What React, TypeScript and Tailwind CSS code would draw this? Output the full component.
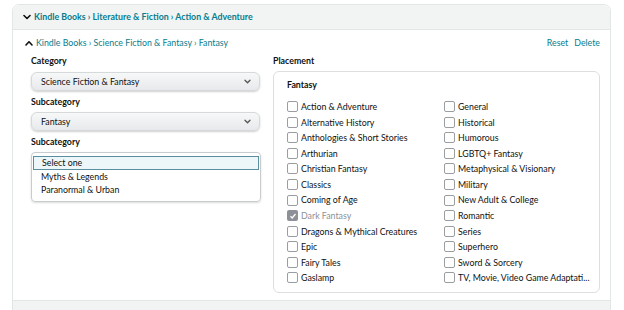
import React from "react";

const font = { fontFamily: 'Lato, "Open Sans", "Liberation Sans", Arial, sans-serif' };

function Chevron({ up = false, className = "" }: { up?: boolean; className?: string }) {
  return (
    <svg width="8" height="6" viewBox="0 0 8 6" className={className}>
      <path
        d={up ? "M1 5 L4 1.8 L7 5" : "M1 1.5 L4 4.5 L7 1.5"}
        fill="none"
        stroke="currentColor"
        strokeWidth="1.6"
        strokeLinecap="round"
        strokeLinejoin="round"
      />
    </svg>
  );
}

function Select({ value }: { value: string }) {
  return (
    <div className="h-[19px] w-[229px] rounded-[6px] border border-[#d5d9d9] bg-gradient-to-b from-[#f7f8f8] to-[#e7e9ec] shadow-[0_1px_2px_rgba(15,17,17,0.2)] flex items-center justify-between pl-[9px] pr-[8px] text-[8.8px] text-[#0f1111]">
      <span>{value}</span>
      <Chevron className="text-[#555] w-[7px] h-[5px]" />
    </div>
  );
}

function Box({ label, checked = false }: { label: string; checked?: boolean }) {
  return (
    <div className="flex items-center h-[15.55px] gap-[3px]">
      {checked ? (
        <div className="w-[11px] h-[11px] rounded-[2px] bg-[#8d9096] flex items-center justify-center">
          <svg width="8" height="8" viewBox="0 0 8 8">
            <path d="M1.5 4.2 L3.2 6 L6.5 2" fill="none" stroke="white" strokeWidth="1.3" />
          </svg>
        </div>
      ) : (
        <div className="w-[11px] h-[11px] rounded-[2px] border border-[#9a9ea0] bg-white" />
      )}
      <span className={`text-[8.8px] ${checked ? "text-[#8d9096]" : "text-[#0f1111]"} whitespace-nowrap`}>{label}</span>
    </div>
  );
}

const col1 = [
  "Action & Adventure",
  "Alternative History",
  "Anthologies & Short Stories",
  "Arthurian",
  "Christian Fantasy",
  "Classics",
  "Coming of Age",
  "Dark Fantasy",
  "Dragons & Mythical Creatures",
  "Epic",
  "Fairy Tales",
  "Gaslamp",
];
const col2 = [
  "General",
  "Historical",
  "Humorous",
  "LGBTQ+ Fantasy",
  "Metaphysical & Visionary",
  "Military",
  "New Adult & College",
  "Romantic",
  "Series",
  "Superhero",
  "Sword & Sorcery",
  "TV, Movie, Video Game Adaptati...",
];

export default function App() {
  return (
    <div className="w-[624px] h-[310px] bg-white overflow-hidden pt-[4px] pl-[12px]" style={font}>
      <div className="w-[599px] h-[320px] border border-[#e3e6e6] rounded-t-[7px] flex flex-col">
        <div className="h-[25px] shrink-0 bg-[#f2f3f3] border-b border-[#e3e6e6] rounded-t-[7px] flex items-center pl-[10px] gap-[3px] text-[8.8px] font-bold text-[#067d8e]">
          <Chevron className="text-[#0f1111]" />
          <span>Kindle Books › Literature &amp; Fiction › Action &amp; Adventure</span>
        </div>
        <div className="h-[271px] shrink-0 bg-white flex flex-col border-b border-[#e3e6e6]">
          <div className="h-[25px] flex items-center justify-between pl-[12px] pr-[10px] pt-[1px]">
            <div className="flex items-center gap-[3px] text-[8.8px] text-[#067d8e]">
              <Chevron up className="text-[#0f1111]" />
              <span>Kindle Books › Science Fiction &amp; Fantasy › Fantasy</span>
            </div>
            <div className="flex gap-[6px] text-[8.8px] text-[#067d8e]">
              <span>Reset</span>
              <span>Delete</span>
            </div>
          </div>
          <div className="flex pl-[18px] gap-[12px]">
            <div className="w-[230px] flex flex-col">
              <div className="h-[11px] flex items-center text-[8.8px] font-bold text-[#0f1111]">Category</div>
              <div className="mt-[6px]"><Select value="Science Fiction & Fantasy" /></div>
              <div className="mt-[5px] h-[11px] flex items-center text-[8.8px] font-bold text-[#0f1111]">Subcategory</div>
              <div className="mt-[5px]"><Select value="Fantasy" /></div>
              <div className="mt-[5px] h-[11px] flex items-center text-[8.8px] font-bold text-[#0f1111]">Subcategory</div>
              <div className="mt-[5px] w-[230px] h-[50px] rounded-[4px] border border-[#c9cccc] shadow-[0_1px_2px_rgba(15,17,17,0.15)] pt-[3px] flex flex-col text-[8.8px] text-[#0f1111]">
                <div className="h-[14px] mx-[1px] border border-[#5a8fa0] bg-[#edf7f9] flex items-center pl-[8px]">Select one</div>
                <div className="h-[13px] flex items-center pl-[9px]">Myths &amp; Legends</div>
                <div className="h-[14px] flex items-center pl-[9px]">Paranormal &amp; Urban</div>
              </div>
            </div>
            <div className="flex flex-col">
              <div className="h-[11px] flex items-center text-[8.8px] font-bold text-[#0f1111]">Placement</div>
              <div className="mt-[5px] w-[327px] h-[222px] rounded-[6px] border border-[#dddfdf] pl-[13px] pt-[7px]">
                <div className="h-[12px] flex items-center text-[8.8px] font-bold text-[#0f1111]">Fantasy</div>
                <div className="mt-[8px] flex">
                  <div className="w-[157px] flex flex-col">
                    {col1.map((l) => (
                      <Box key={l} label={l} checked={l === "Dark Fantasy"} />
                    ))}
                  </div>
                  <div className="flex flex-col">
                    {col2.map((l) => (
                      <Box key={l} label={l} />
                    ))}
                  </div>
                </div>
              </div>
            </div>
          </div>
        </div>
        <div className="flex-1 bg-[#f2f3f3]" />
      </div>
    </div>
  );
}
